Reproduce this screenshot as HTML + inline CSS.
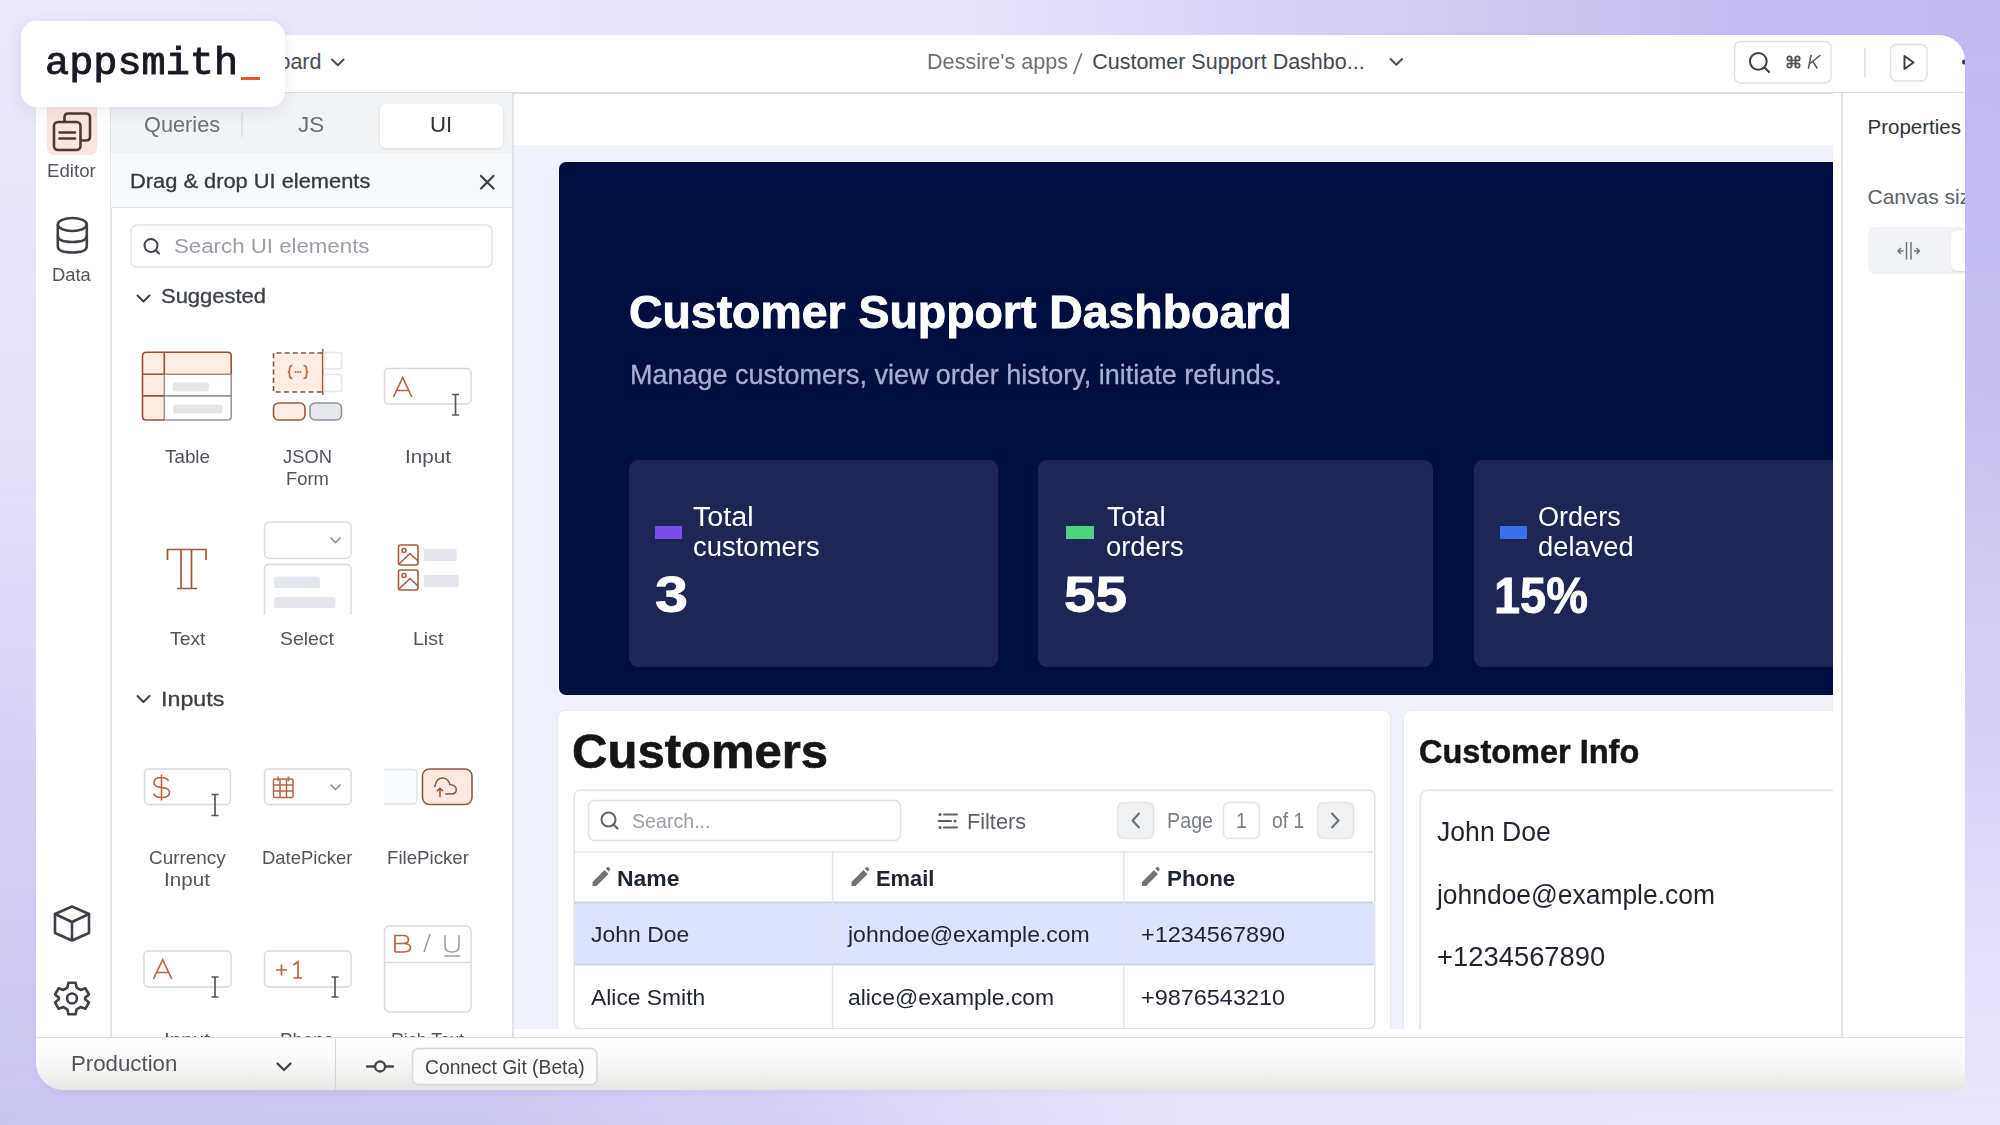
<!DOCTYPE html>
<html><head><meta charset="utf-8">
<style>
*{box-sizing:border-box;margin:0;padding:0}
html,body{width:2000px;height:1125px;overflow:hidden;font-family:"Liberation Sans",sans-serif}
body{position:relative;background:#dcd6f6}
.a{position:absolute}
#bg1{left:0;top:0;width:2000px;height:1125px;background:linear-gradient(to right,#ebe8f9 0%,#e7e3f8 48%,#dcd7f6 60%,#cdc6f2 75%,#c3bbf1 88%,#c1b9f0 100%)}
#bg2{left:0;top:0;width:2000px;height:1125px;background:linear-gradient(to right,#c9c3f1 0%,#cbc5f2 25%,#d3cef4 36%,#dfdbf7 48%,#e7e4f9 60%,#e9e6f9 100%);-webkit-mask-image:linear-gradient(to bottom,transparent 0%,rgba(0,0,0,.12) 35%,rgba(0,0,0,.5) 62%,rgba(0,0,0,.88) 85%,#000 100%)}
#shadow{left:36px;top:35px;width:1929px;height:1055px;border-radius:26px 26px 3px 28px;box-shadow:0 8px 14px -10px rgba(60,40,140,.08)}
#win{left:0;top:0;width:2000px;height:1125px;clip-path:inset(35px 35px 35px 36px round 26px 26px 3px 28px);background:#fff}
.t{position:absolute;white-space:nowrap;line-height:1;z-index:2}
.bl{position:absolute;background:#e4e5e8}
svg{position:absolute;overflow:visible}
</style></head><body>
<div id="bg1" class="a"></div>
<div id="bg2" class="a"></div>
<div id="shadow" class="a"></div>
<div id="win" class="a">
  <!-- ===== header ===== -->
  <div class="bl" style="left:36px;top:92px;width:1929px;height:1.5px;background:#dcdee2"></div>
  <!-- header breadcrumb chevrons -->
  <svg style="left:0;top:0" width="2000" height="100">
    <path d="M332 59.5 L337.8 65.3 L343.6 59.5" fill="none" stroke="#4a4f57" stroke-width="2" stroke-linecap="round" stroke-linejoin="round"/>
    <path d="M1074 73.5 L1081.5 54" stroke="#6e727a" stroke-width="1.7" stroke-linecap="round"/>
    <path d="M1390.5 59 L1396.3 64.8 L1402.1 59" fill="none" stroke="#4a4f57" stroke-width="2" stroke-linecap="round" stroke-linejoin="round"/>
    <!-- search box -->
    <rect x="1734.5" y="41.5" width="96.5" height="41.5" rx="6" fill="#fff" stroke="#dfe1e5" stroke-width="1.5"/>
    <circle cx="1758.3" cy="61.3" r="8.4" fill="none" stroke="#3c4046" stroke-width="2"/>
    <path d="M1764.3 67.3 L1769 72" stroke="#3c4046" stroke-width="2.2" stroke-linecap="round"/>
    <!-- cmd symbol -->
    <g fill="none" stroke="#4f535a" stroke-width="1.7">
      <path d="M1791.5 58.5 V65.5 M1795.5 58.5 V65.5 M1791.5 60.5 H1795.5 M1791.5 63.5 H1795.5"/>
      <circle cx="1789.5" cy="58.5" r="2.2"/><circle cx="1797.5" cy="58.5" r="2.2"/><circle cx="1789.5" cy="65.5" r="2.2"/><circle cx="1797.5" cy="65.5" r="2.2"/>
    </g>
    <path d="M1811 55.5 L1808.5 68 M1820 55.5 L1810.5 63 M1812.8 61.5 L1817 68" fill="none" stroke="#4f535a" stroke-width="1.5" stroke-linecap="round"/>
    <!-- divider -->
    <path d="M1865 48 V77" stroke="#dcdee2" stroke-width="1.5"/>
    <!-- play btn -->
    <rect x="1890.5" y="44.5" width="36.5" height="36.5" rx="6" fill="#fff" stroke="#dfe1e5" stroke-width="1.5"/>
    <path d="M1904.5 56 L1913.5 62.5 L1904.5 69 Z" fill="none" stroke="#3c4048" stroke-width="2" stroke-linejoin="round"/>
    <circle cx="1964.5" cy="62" r="2.5" fill="#3c4048"/>
  </svg>

  <!-- ===== left sidebar ===== -->
  <div class="bl" style="left:110px;top:93px;width:1.5px;height:944px"></div>
  <div class="a" style="left:47px;top:98px;width:50px;height:57px;border-radius:7px;background:#f9e6df"></div>
  <svg style="left:0;top:0" width="120" height="1040">
    <g fill="none" stroke="#4d3a33" stroke-width="2.6" stroke-linejoin="round">
      <path d="M64.5 122 V117.5 Q64.5 113.5 68.5 113.5 H86 Q90 113.5 90 117.5 V136.5 Q90 140.5 86 140.5 H80.5"/>
      <rect x="54" y="122" width="26.5" height="28" rx="4"/>
      <path d="M59.5 132.5 H75 M59.5 138.5 H75" stroke-linecap="round"/>
    </g>
    <g fill="none" stroke="#3c4048" stroke-width="2.6">
      <ellipse cx="72.3" cy="224.5" rx="14.5" ry="6.5"/>
      <path d="M57.8 224.5 V246 Q57.8 252.5 72.3 252.5 Q86.8 252.5 86.8 246 V224.5"/>
      <path d="M57.8 235.5 Q57.8 242 72.3 242 Q86.8 242 86.8 235.5"/>
    </g>
    <g fill="none" stroke="#3c4048" stroke-width="2.6" stroke-linejoin="round">
      <path d="M72 906.5 L89 914 V933 L72 940.5 L55 933 V914 Z"/>
      <path d="M55 914 L72 922 L89 914 M72 922 V940.5"/>
    </g>
    <g transform="translate(72 998.5) scale(0.9)" fill="none" stroke="#3c4048" stroke-width="2.9" stroke-linejoin="round">
      <path d="M-4 -17.5 H4 L5.2 -12 L9.5 -9.5 L14.8 -11.4 L18.8 -4.5 L14.6 -0.8 V0.8 L18.8 4.5 L14.8 11.4 L9.5 9.5 L5.2 12 L4 17.5 H-4 L-5.2 12 L-9.5 9.5 L-14.8 11.4 L-18.8 4.5 L-14.6 0.8 V-0.8 L-18.8 -4.5 L-14.8 -11.4 L-9.5 -9.5 L-5.2 -12 Z"/>
      <circle cx="0" cy="0" r="5.5"/>
    </g>
  </svg>

  <!-- ===== left panel ===== -->
  <div class="a" style="left:111px;top:93px;width:401px;height:60px;background:#f1f3f5"></div>
  <div class="a" style="left:111px;top:153px;width:401px;height:54px;background:#f8f9fa"></div>
  <div class="bl" style="left:111px;top:206.5px;width:401px;height:1.5px;background:#e3e5e8"></div>
  <div class="a" style="left:379.5px;top:104px;width:123px;height:44px;border-radius:6px;background:#fff;box-shadow:0 1px 3px rgba(0,0,0,.10)"></div>
  <div class="bl" style="left:512px;top:93px;width:1.5px;height:944px;background:#e2e4e7"></div>
  <svg style="left:0;top:0" width="520" height="1040">
    <path d="M242 113 V137" stroke="#dadde1" stroke-width="1.5"/>
    <path d="M481 176 L493.5 188.5 M493.5 176 L481 188.5" stroke="#3c4048" stroke-width="2.2" stroke-linecap="round"/>
    <rect x="131" y="225" width="361" height="42" rx="6" fill="#fff" stroke="#dfe2e6" stroke-width="1.5"/>
    <circle cx="151" cy="245.5" r="6.5" fill="none" stroke="#3c4048" stroke-width="2"/>
    <path d="M155.8 250.3 L159 253.5" stroke="#3c4048" stroke-width="2" stroke-linecap="round"/>
    <path d="M137.5 295.5 L143.5 301.5 L149.5 295.5" fill="none" stroke="#3c4048" stroke-width="2" stroke-linecap="round" stroke-linejoin="round"/>
    <path d="M137.5 696 L143.5 702 L149.5 696" fill="none" stroke="#3c4048" stroke-width="2" stroke-linecap="round" stroke-linejoin="round"/>

    <!-- Table icon -->
    <g stroke-width="1.6">
      <path d="M142.5 356 Q142.5 352.3 146.2 352.3 H227.5 Q231.2 352.3 231.2 356 V374.2 H142.5 Z" fill="#fdede3"/>
      <rect x="142.5" y="374.2" width="21.8" height="46" fill="#fdede3"/>
      <path d="M164.3 374.2 V420 H227.5 Q231.2 420 231.2 416.3 V374.2" fill="none" stroke="#94989e"/>
      <path d="M164.3 395.9 H231.2" stroke="#94989e"/>
      <path d="M164.3 374.2 H231.2" stroke="#a98a7e"/>
      <path d="M231.2 374.2 V356 Q231.2 352.3 227.5 352.3 H146.2 Q142.5 352.3 142.5 356 V416.3 Q142.5 420 146.2 420 H164.3 M164.3 374.2 V352.3 M142.5 374.2 H164.3 M142.5 395.9 H164.3" fill="none" stroke="#9c4e32"/>
      <rect x="172.9" y="382.3" width="36" height="9.3" rx="3" fill="#e3e5e9"/>
      <rect x="172.9" y="404.4" width="50" height="9" rx="3" fill="#e3e5e9"/>
    </g>
    <!-- JSON form icon -->
    <g stroke-width="1.6">
      <rect x="273.5" y="353" width="49" height="39" fill="#fdede3"/>
      <path d="M322.5 353 H273.5 V392 H322.5" fill="none" stroke="#7d5647" stroke-dasharray="5 3.2"/>
      <path d="M322.7 349 V395" stroke="#a05739"/>
      <path d="M292.5 365.5 Q289.5 365.5 289.5 368.5 V370 Q289.5 372 287.8 372 Q289.5 372 289.5 374 V375.5 Q289.5 378.5 292.5 378.5 M303.5 365.5 Q306.5 365.5 306.5 368.5 V370 Q306.5 372 308.2 372 Q306.5 372 306.5 374 V375.5 Q306.5 378.5 303.5 378.5" fill="none" stroke="#c26a42" stroke-width="1.7"/>
      <circle cx="295.5" cy="372" r="1.1" fill="#c26a42"/><circle cx="298" cy="372" r="1.1" fill="#c26a42"/><circle cx="300.5" cy="372" r="1.1" fill="#c26a42"/>
      <rect x="324" y="352.5" width="17.5" height="16.5" rx="2.5" fill="#fff" stroke="#e4e6ea"/>
      <rect x="324" y="374.5" width="17.5" height="17" rx="2.5" fill="#fff" stroke="#e4e6ea"/>
      <rect x="273.5" y="403" width="31.5" height="17" rx="5" fill="#fdede3" stroke="#a05739"/>
      <rect x="310" y="403" width="31.5" height="17" rx="5" fill="#e5e7ec" stroke="#8f949b"/>
    </g>
    <!-- Input icon -->
    <rect x="384.5" y="368.5" width="86.5" height="35.5" rx="4" fill="#fff" stroke="#d8dbdf" stroke-width="1.5"/>
    <path d="M393.5 397 L402.7 377.5 L411.8 397 M396.7 390.5 H408.6" fill="none" stroke="#bb6241" stroke-width="1.6"/>
    <path d="M455.5 394.5 V415 M452 394.5 H459 M452 415 H459" fill="none" stroke="#55595f" stroke-width="1.7"/>
    <!-- Text icon -->
    <g fill="none" stroke="#a05739" stroke-width="1.7">
      <path d="M167.5 560 V549.5 H206 V560"/>
      <path d="M181 549.5 V588.5 M191.5 549.5 V588.5 M177 588.5 H197"/>
    </g>
    <!-- Select icon -->
    <rect x="264.5" y="522" width="86.5" height="36.5" rx="5" fill="#fff" stroke="#dadde1" stroke-width="1.5"/>
    <path d="M330.5 537.5 L335.5 542.5 L340.5 537.5" fill="none" stroke="#8d9299" stroke-width="1.6"/>
    <path d="M264.5 615 V569 Q264.5 564.5 269 564.5 H346.5 Q351 564.5 351 569 V615" fill="#fff" stroke="#dadde1" stroke-width="1.5"/>
    <rect x="274" y="576.6" width="46" height="11.5" rx="2.5" fill="#e3e6ec"/>
    <rect x="274" y="597" width="61.5" height="11" rx="2.5" fill="#e3e6ec"/>
    <!-- List icon -->
    <g fill="none" stroke="#a95b3d" stroke-width="1.6">
      <rect x="398.5" y="545" width="19.5" height="20" rx="2"/>
      <rect x="398.5" y="570" width="19.5" height="20" rx="2"/>
      <circle cx="404" cy="550.5" r="2"/><circle cx="404" cy="575.5" r="2"/>
      <path d="M399 564 L410 553.5 L418 561 M399 589 L410 578.5 L418 586"/>
    </g>
    <rect x="424" y="549" width="32.5" height="12" rx="1.5" fill="#e2e5ea"/>
    <rect x="424" y="575" width="34.5" height="12" rx="1.5" fill="#e2e5ea"/>

    <!-- Currency input -->
    <rect x="144.5" y="769" width="86" height="35.5" rx="4" fill="#fff" stroke="#d8dbdf" stroke-width="1.5"/>
    <path d="M168.5 781 Q167 777.5 161.5 777.5 Q154 777.5 154 782.5 Q154 787 161.5 787.5 Q169.5 788 169.5 792.5 Q169.5 797.5 161.5 797.5 Q155 797.5 153.5 793.5 M161.5 774.5 V800.5" fill="none" stroke="#bb6241" stroke-width="1.6"/>
    <path d="M215 794.5 V815.5 M211.5 794.5 H218.5 M211.5 815.5 H218.5" fill="none" stroke="#55595f" stroke-width="1.7"/>
    <!-- DatePicker -->
    <rect x="264.5" y="769" width="86.5" height="35.5" rx="4" fill="#fff" stroke="#d8dbdf" stroke-width="1.5"/>
    <g fill="none" stroke="#bb6241" stroke-width="1.5">
      <rect x="273.5" y="779" width="19.5" height="18.5" rx="1.5"/>
      <path d="M273.5 785 H293 M273.5 791 H293 M280 779 V797.5 M286.5 779 V797.5 M278 776.5 V781 M288.5 776.5 V781"/>
    </g>
    <path d="M330.5 784.5 L335.5 789.5 L340.5 784.5" fill="none" stroke="#8d9299" stroke-width="1.6"/>
    <!-- FilePicker -->
    <path d="M384 769.5 H413 Q417 769.5 417 773.5 V800 Q417 804 413 804 H384" fill="#fafbfc" stroke="#e3e5e8" stroke-width="1.5"/>
    <rect x="422.5" y="769" width="49.5" height="35.5" rx="7" fill="#fde9e1" stroke="#8f5b45" stroke-width="1.6"/>
    <path d="M434.8 786.5 Q436.5 778 442.3 778 Q448 778 450 784.5 Q456.3 785.5 456.3 789.5 Q456.3 794 451 794 H445.8" fill="none" stroke="#8d5642" stroke-width="1.5" stroke-linecap="round"/>
    <path d="M440 796.5 V788.2 M437.4 790.8 L440 788.2 L442.6 790.8" fill="none" stroke="#b0452e" stroke-width="1.5" stroke-linecap="round"/>

    <!-- Input row4 -->
    <rect x="144" y="951" width="87" height="36" rx="4" fill="#fff" stroke="#d8dbdf" stroke-width="1.5"/>
    <path d="M153.5 979 L162.7 959.7 L171.8 979 M156.7 972.5 H168.6" fill="none" stroke="#bb6241" stroke-width="1.6"/>
    <path d="M215 977 V997 M211.5 977 H218.5 M211.5 997 H218.5" fill="none" stroke="#55595f" stroke-width="1.7"/>
    <!-- Phone -->
    <rect x="264.5" y="951" width="86.5" height="36" rx="4" fill="#fff" stroke="#d8dbdf" stroke-width="1.5"/>
    <path d="M276 970 H287 M281.5 964.5 V975.5 M293.5 965 L298 961.7 V978 M293.5 978 H302" fill="none" stroke="#bb6241" stroke-width="1.7"/>
    <path d="M335 977 V997 M331.5 977 H338.5 M331.5 997 H338.5" fill="none" stroke="#55595f" stroke-width="1.7"/>
    <!-- Rich text -->
    <rect x="384.5" y="926" width="86.5" height="86" rx="5" fill="#fff" stroke="#d8dbdf" stroke-width="1.5"/>
    <path d="M384.5 962.6 H471" stroke="#dadde1" stroke-width="1.5"/>
    <path d="M395 952 V935.5 H403 Q408.5 935.5 408.5 939.8 Q408.5 943.5 403 943.5 H395 M403 943.5 Q410.5 943.5 410.5 947.8 Q410.5 952 403 952 H395" fill="none" stroke="#bb6241" stroke-width="1.7"/>
    <path d="M430 934 L424 952" stroke="#9a9ea5" stroke-width="1.5"/>
    <path d="M445 935 V946 Q445 952 452 952 Q459 952 459 946 V935 M444.5 956 H460" fill="none" stroke="#9a9ea5" stroke-width="1.5"/>
  </svg>

  <!-- ===== canvas ===== -->
  <div class="a" style="left:513.5px;top:145px;width:1319.5px;height:892px;background:#eff2fa"></div>
  <div class="a" style="left:559px;top:161.5px;width:1274px;height:533.5px;border-radius:7px 0 0 7px;background:#010f40;overflow:hidden">
    <div class="a" style="left:70px;top:298.5px;width:369px;height:207px;border-radius:9px;background:#1d2655"></div>
    <div class="a" style="left:479px;top:298.5px;width:395px;height:207px;border-radius:9px;background:#1d2655"></div>
    <div class="a" style="left:915px;top:298.5px;width:400px;height:207px;border-radius:9px;background:#1d2655"></div>
    <div class="a" style="left:96px;top:364px;width:27px;height:13px;background:#7b4de8"></div>
    <div class="a" style="left:506.5px;top:364px;width:28.5px;height:13px;background:#4bd37f"></div>
    <div class="a" style="left:941px;top:364px;width:26.5px;height:13.5px;background:#3b6fe8"></div>
  </div>
  <!-- customers card -->
  <div class="a" style="left:557.5px;top:710.5px;width:832.5px;height:340px;border-radius:7px;background:#fff;box-shadow:0 0 0 1px #e6e8ef"></div>
  <div class="a" style="left:574.5px;top:790.5px;width:799px;height:237.5px;border-radius:5px;background:#fff;box-shadow:0 0 0 1.5px #e1e3e8"></div>
  <div class="a" style="left:574.5px;top:902.5px;width:799px;height:62px;background:#dce3fa"></div>
  <svg style="left:0;top:0" width="1850" height="1040">
    <rect x="588.5" y="800.5" width="312" height="40" rx="6" fill="#fff" stroke="#dfe2e6" stroke-width="1.5"/>
    <circle cx="608.5" cy="819.5" r="7" fill="none" stroke="#62676e" stroke-width="2.1"/>
    <path d="M613.5 824.5 L617.5 828.5" stroke="#62676e" stroke-width="2.3" stroke-linecap="round"/>
    <!-- filters icon -->
    <g stroke="#5d626a" stroke-width="2" stroke-linecap="round">
      <path d="M944 814.5 H957 M938.5 821 H951 M944 827.5 H957"/>
    </g>
    <circle cx="940" cy="814.5" r="1.6" fill="#5d626a"/><circle cx="955" cy="821" r="1.6" fill="#5d626a"/><circle cx="940" cy="827.5" r="1.6" fill="#5d626a"/>
    <!-- prev/next -->
    <rect x="1117.5" y="802.5" width="36" height="36" rx="6" fill="#f0f1f3" stroke="#e3e5e8" stroke-width="1.5"/>
    <path d="M1139 813.5 L1132.5 820.5 L1139 827.5" fill="none" stroke="#6a6f77" stroke-width="2" stroke-linecap="round" stroke-linejoin="round"/>
    <rect x="1223.5" y="802.5" width="36" height="36" rx="6" fill="#fff" stroke="#e3e5e8" stroke-width="1.5"/>
    <rect x="1317.5" y="802.5" width="36" height="36" rx="6" fill="#f0f1f3" stroke="#e3e5e8" stroke-width="1.5"/>
    <path d="M1332 813.5 L1338.5 820.5 L1332 827.5" fill="none" stroke="#6a6f77" stroke-width="2" stroke-linecap="round" stroke-linejoin="round"/>
    <!-- table grid -->
    <path d="M574.5 852 H1373 M574.5 902.5 H1373 M574.5 964.5 H1373" stroke="#e1e3e8" stroke-width="1.5"/>
    <path d="M574.5 902.5 H1373 M574.5 964.5 H1373" stroke="#c9cfdc" stroke-width="1.5"/>
    <path d="M832.5 852 V1028 M1123.7 852 V1028" stroke="#e3e5ea" stroke-width="1.5"/>
    <!-- pencils -->
    <g fill="#6f737a">
      <path d="M592.5 882 L604.5 870 L608.5 874 L596.5 886 L592.5 886 Z M605.8 868.7 L607.2 867.3 Q608 866.5 608.8 867.3 L610 868.5 Q610.8 869.3 610 870.1 L608.6 871.5 Z"/>
      <path d="M851.5 882 L863.5 870 L867.5 874 L855.5 886 L851.5 886 Z M864.8 868.7 L866.2 867.3 Q867 866.5 867.8 867.3 L869 868.5 Q869.8 869.3 869 870.1 L867.6 871.5 Z"/>
      <path d="M1142 882 L1154 870 L1158 874 L1146 886 L1142 886 Z M1155.3 868.7 L1156.7 867.3 Q1157.5 866.5 1158.3 867.3 L1159.5 868.5 Q1160.3 869.3 1159.5 870.1 L1158.1 871.5 Z"/>
    </g>
  </svg>
  <!-- customer info card -->
  <div class="a" style="left:1403.5px;top:711px;width:460px;height:340px;border-radius:7px;background:#fff;box-shadow:0 0 0 1px #e6e8ef"></div>
  <div class="a" style="left:1420.5px;top:790.5px;width:440px;height:300px;border-radius:7px;background:#fff;box-shadow:0 0 0 1.5px #e2e4e9"></div>

  <div class="a" style="left:513.5px;top:1028.5px;width:1328px;height:9px;background:#fff"></div>
  <!-- ===== properties ===== -->
  <div class="a" style="left:1833px;top:93px;width:10px;height:944px;background:#fff"></div>
  <div class="a" style="left:1841px;top:93px;width:130px;height:944px;background:#fff"></div>
  <div class="bl" style="left:1841px;top:93px;width:1.5px;height:944px;background:#e2e4e7"></div>
  <div class="a" style="left:1868px;top:227px;width:110px;height:47px;border-radius:7px;background:#f1f3f6"></div>
  <div class="a" style="left:1951px;top:231px;width:40px;height:40px;border-radius:6px;background:#fff;box-shadow:0 1px 2px rgba(0,0,0,.1)"></div>
  <svg style="left:0;top:0" width="2000" height="300">
    <path d="M1906.5 242 V259.5 M1911 242 V259.5" stroke="#6e737b" stroke-width="1.5"/>
    <path d="M1903.5 251 H1898 M1901 248 L1898 251 L1901 254 M1914 251 H1919.5 M1916.5 248 L1919.5 251 L1916.5 254" fill="none" stroke="#6e737b" stroke-width="1.5" stroke-linejoin="round"/>
  </svg>

  <!-- ===== footer ===== -->
  <div class="a" style="left:36px;top:1037px;width:1929px;height:53px;background:linear-gradient(#fff 0%,#fcfcfc 30%,#f2f2f1 68%,#e4e4e2 100%);z-index:3"></div>
  <div class="bl" style="left:36px;top:1036.5px;width:1929px;height:1.5px;background:#dcdee2;z-index:3"></div>
  <div class="bl" style="left:334.5px;top:1037px;width:1.5px;height:53px;background:#d3d5d8;z-index:3"></div>
  <svg style="left:0;top:0;z-index:3" width="700" height="1125">
    <path d="M277.5 1063.5 L284 1070 L290.5 1063.5" fill="none" stroke="#3c4048" stroke-width="2.2" stroke-linecap="round" stroke-linejoin="round"/>
    <path d="M367 1066.5 H374.8 M385.5 1066.5 H393" stroke="#44484f" stroke-width="2.3" stroke-linecap="round"/>
    <circle cx="380.1" cy="1066.5" r="5" fill="none" stroke="#44484f" stroke-width="2.3"/>
    <rect x="412.5" y="1048.5" width="184.5" height="36" rx="6" fill="#fbfbfb" stroke="#d6d8dc" stroke-width="1.5"/>
  </svg>

<div class="t" style="left:216.3px;top:52.00px;font-size:21.5px;font-weight:400;color:#4a4f57;font-family:'Liberation Sans',sans-serif;">Dashboard</div>
<div class="t" style="left:926.9px;top:51.50px;font-size:21.5px;font-weight:400;color:#6b6f76;font-family:'Liberation Sans',sans-serif;transform:scaleX(1.0059);transform-origin:0 0;">Dessire's apps</div>
<div class="t" style="left:1092.2px;top:51.50px;font-size:21.5px;font-weight:400;color:#44484f;font-family:'Liberation Sans',sans-serif;">Customer Support Dashbo...</div>
<div class="t" style="left:143.9px;top:115.00px;font-size:21.5px;font-weight:400;color:#6b7079;font-family:'Liberation Sans',sans-serif;transform:scaleX(1.0113);transform-origin:0 0;">Queries</div>
<div class="t" style="left:297.9px;top:115.00px;font-size:21.5px;font-weight:400;color:#6b7079;font-family:'Liberation Sans',sans-serif;transform:scaleX(1.0421);transform-origin:0 0;">JS</div>
<div class="t" style="left:429.9px;top:115.00px;font-size:21.5px;font-weight:400;color:#2f343b;font-family:'Liberation Sans',sans-serif;transform:scaleX(1.0302);transform-origin:0 0;">UI</div>
<div class="t" style="left:130.0px;top:171.00px;font-size:20.5px;font-weight:400;color:#343a42;font-family:'Liberation Sans',sans-serif;transform:scaleX(1.0653);transform-origin:0 0;-webkit-text-stroke:0.3px #343a42">Drag &amp; drop UI elements</div>
<div class="t" style="left:173.6px;top:236.00px;font-size:20.5px;font-weight:400;color:#9a9fa7;font-family:'Liberation Sans',sans-serif;transform:scaleX(1.0856);transform-origin:0 0;">Search UI elements</div>
<div class="t" style="left:161.0px;top:286.00px;font-size:20px;font-weight:400;color:#3b4048;font-family:'Liberation Sans',sans-serif;transform:scaleX(1.0979);transform-origin:0 0;-webkit-text-stroke:0.3px #3b4048">Suggested</div>
<div class="t" style="left:47.1px;top:163.00px;font-size:17.5px;font-weight:400;color:#505660;font-family:'Liberation Sans',sans-serif;transform:scaleX(1.0663);transform-origin:0 0;">Editor</div>
<div class="t" style="left:52.1px;top:267.00px;font-size:17.5px;font-weight:400;color:#505660;font-family:'Liberation Sans',sans-serif;transform:scaleX(1.0482);transform-origin:0 0;">Data</div>
<div class="t" style="left:164.6px;top:447.00px;font-size:19px;font-weight:400;color:#50555d;font-family:'Liberation Sans',sans-serif;transform:scaleX(0.9907);transform-origin:0 0;">Table</div>
<div class="t" style="left:283.1px;top:447.00px;font-size:19px;font-weight:400;color:#50555d;font-family:'Liberation Sans',sans-serif;transform:scaleX(0.9647);transform-origin:0 0;">JSON</div>
<div class="t" style="left:286.1px;top:469.00px;font-size:19px;font-weight:400;color:#50555d;font-family:'Liberation Sans',sans-serif;transform:scaleX(0.9678);transform-origin:0 0;">Form</div>
<div class="t" style="left:405.1px;top:447.00px;font-size:19px;font-weight:400;color:#50555d;font-family:'Liberation Sans',sans-serif;transform:scaleX(1.0860);transform-origin:0 0;">Input</div>
<div class="t" style="left:169.6px;top:629.00px;font-size:19px;font-weight:400;color:#50555d;font-family:'Liberation Sans',sans-serif;transform:scaleX(1.0155);transform-origin:0 0;">Text</div>
<div class="t" style="left:280.1px;top:629.00px;font-size:19px;font-weight:400;color:#50555d;font-family:'Liberation Sans',sans-serif;transform:scaleX(1.0206);transform-origin:0 0;">Select</div>
<div class="t" style="left:412.6px;top:629.00px;font-size:19px;font-weight:400;color:#50555d;font-family:'Liberation Sans',sans-serif;transform:scaleX(1.0278);transform-origin:0 0;">List</div>
<div class="t" style="left:161.0px;top:688.50px;font-size:20px;font-weight:400;color:#3b4048;font-family:'Liberation Sans',sans-serif;transform:scaleX(1.1618);transform-origin:0 0;-webkit-text-stroke:0.3px #3b4048">Inputs</div>
<div class="t" style="left:148.9px;top:848.00px;font-size:19px;font-weight:400;color:#50555d;font-family:'Liberation Sans',sans-serif;transform:scaleX(0.9938);transform-origin:0 0;">Currency</div>
<div class="t" style="left:164.1px;top:870.00px;font-size:19px;font-weight:400;color:#50555d;font-family:'Liberation Sans',sans-serif;transform:scaleX(1.0860);transform-origin:0 0;">Input</div>
<div class="t" style="left:262.1px;top:848.00px;font-size:19px;font-weight:400;color:#50555d;font-family:'Liberation Sans',sans-serif;transform:scaleX(0.9718);transform-origin:0 0;">DatePicker</div>
<div class="t" style="left:387.1px;top:848.00px;font-size:19px;font-weight:400;color:#50555d;font-family:'Liberation Sans',sans-serif;transform:scaleX(0.9819);transform-origin:0 0;">FilePicker</div>
<div class="t" style="left:164.1px;top:1030.00px;font-size:19px;font-weight:400;color:#50555d;font-family:'Liberation Sans',sans-serif;transform:scaleX(1.0860);transform-origin:0 0;">Input</div>
<div class="t" style="left:280.1px;top:1030.00px;font-size:19px;font-weight:400;color:#50555d;font-family:'Liberation Sans',sans-serif;transform:scaleX(0.9808);transform-origin:0 0;">Phone</div>
<div class="t" style="left:391.1px;top:1030.00px;font-size:19px;font-weight:400;color:#50555d;font-family:'Liberation Sans',sans-serif;transform:scaleX(0.9371);transform-origin:0 0;">Rich Text</div>
<div class="t" style="left:70.5px;top:1052.80px;font-size:21.8px;font-weight:400;color:#50555d;font-family:'Liberation Sans',sans-serif;transform:scaleX(1.0207);transform-origin:0 0;z-index:4">Production</div>
<div class="t" style="left:424.9px;top:1056.00px;font-size:21px;font-weight:400;color:#3f444b;font-family:'Liberation Sans',sans-serif;transform:scaleX(0.9177);transform-origin:0 0;z-index:4">Connect Git (Beta)</div>
<div class="t" style="left:1867.5px;top:117.00px;font-size:20.5px;font-weight:400;color:#30353c;font-family:'Liberation Sans',sans-serif;">Properties</div>
<div class="t" style="left:1867.5px;top:186.30px;font-size:21px;font-weight:400;color:#5d626a;font-family:'Liberation Sans',sans-serif;">Canvas size</div>
<div class="t" style="left:628.7px;top:288.80px;font-size:46px;font-weight:700;color:#fff;font-family:'Liberation Sans',sans-serif;transform:scaleX(1.0088);transform-origin:0 0;-webkit-text-stroke:0.9px #fff">Customer Support Dashboard</div>
<div class="t" style="left:629.6px;top:360.70px;font-size:27.5px;font-weight:400;color:#a6aed3;font-family:'Liberation Sans',sans-serif;transform:scaleX(0.9810);transform-origin:0 0;-webkit-text-stroke:0.3px #a6aed3">Manage customers, view order history, initiate refunds.</div>
<div class="t" style="left:692.6px;top:504.00px;font-size:27px;font-weight:400;color:#fff;font-family:'Liberation Sans',sans-serif;transform:scaleX(1.0640);transform-origin:0 0;">Total</div>
<div class="t" style="left:692.6px;top:534.00px;font-size:27px;font-weight:400;color:#fff;font-family:'Liberation Sans',sans-serif;transform:scaleX(1.0173);transform-origin:0 0;">customers</div>
<div class="t" style="left:654.5px;top:570.00px;font-size:50px;font-weight:700;color:#fff;font-family:'Liberation Sans',sans-serif;transform:scaleX(1.1865);transform-origin:0 0;-webkit-text-stroke:0.8px #fff">3</div>
<div class="t" style="left:1106.7px;top:504.00px;font-size:27px;font-weight:400;color:#fff;font-family:'Liberation Sans',sans-serif;transform:scaleX(1.0290);transform-origin:0 0;">Total</div>
<div class="t" style="left:1105.7px;top:534.00px;font-size:27px;font-weight:400;color:#fff;font-family:'Liberation Sans',sans-serif;transform:scaleX(1.0153);transform-origin:0 0;">orders</div>
<div class="t" style="left:1063.5px;top:570.00px;font-size:50px;font-weight:700;color:#fff;font-family:'Liberation Sans',sans-serif;transform:scaleX(1.1326);transform-origin:0 0;-webkit-text-stroke:0.8px #fff">55</div>
<div class="t" style="left:1537.7px;top:503.70px;font-size:27px;font-weight:400;color:#fff;font-family:'Liberation Sans',sans-serif;transform:scaleX(1.0020);transform-origin:0 0;">Orders</div>
<div class="t" style="left:1537.7px;top:533.50px;font-size:27px;font-weight:400;color:#fff;font-family:'Liberation Sans',sans-serif;transform:scaleX(1.0117);transform-origin:0 0;height:23.5px;overflow:hidden">delayed</div>
<div class="t" style="left:1493.5px;top:570.50px;font-size:50px;font-weight:700;color:#fff;font-family:'Liberation Sans',sans-serif;transform:scaleX(0.9393);transform-origin:0 0;-webkit-text-stroke:0.8px #fff">15%</div>
<div class="t" style="left:572.1px;top:727.00px;font-size:49px;font-weight:700;color:#151515;font-family:'Liberation Sans',sans-serif;-webkit-text-stroke:0.7px #151515">Customers</div>
<div class="t" style="left:632.0px;top:809.50px;font-size:21px;font-weight:400;color:#9a9fa7;font-family:'Liberation Sans',sans-serif;transform:scaleX(0.9340);transform-origin:0 0;">Search...</div>
<div class="t" style="left:966.9px;top:810.90px;font-size:22px;font-weight:400;color:#5d626a;font-family:'Liberation Sans',sans-serif;transform:scaleX(0.9851);transform-origin:0 0;">Filters</div>
<div class="t" style="left:1166.5px;top:809.50px;font-size:22px;font-weight:400;color:#7a7f87;font-family:'Liberation Sans',sans-serif;transform:scaleX(0.8971);transform-origin:0 0;">Page</div>
<div class="t" style="left:1235.9px;top:809.50px;font-size:22px;font-weight:400;color:#7a7f87;font-family:'Liberation Sans',sans-serif;transform:scaleX(0.8816);transform-origin:0 0;">1</div>
<div class="t" style="left:1271.9px;top:809.50px;font-size:22px;font-weight:400;color:#7a7f87;font-family:'Liberation Sans',sans-serif;transform:scaleX(0.8773);transform-origin:0 0;">of 1</div>
<div class="t" style="left:616.6px;top:867.50px;font-size:22px;font-weight:700;color:#1d2630;font-family:'Liberation Sans',sans-serif;transform:scaleX(1.0430);transform-origin:0 0;">Name</div>
<div class="t" style="left:875.7px;top:867.50px;font-size:22px;font-weight:700;color:#1d2630;font-family:'Liberation Sans',sans-serif;transform:scaleX(0.9948);transform-origin:0 0;">Email</div>
<div class="t" style="left:1166.6px;top:867.50px;font-size:22px;font-weight:700;color:#1d2630;font-family:'Liberation Sans',sans-serif;transform:scaleX(1.0144);transform-origin:0 0;">Phone</div>
<div class="t" style="left:590.5px;top:924.00px;font-size:22.5px;font-weight:400;color:#1f2430;font-family:'Liberation Sans',sans-serif;transform:scaleX(1.0200);transform-origin:0 0;">John Doe</div>
<div class="t" style="left:847.9px;top:924.00px;font-size:22.5px;font-weight:400;color:#1f2430;font-family:'Liberation Sans',sans-serif;transform:scaleX(1.0212);transform-origin:0 0;">johndoe@example.com</div>
<div class="t" style="left:1140.9px;top:924.00px;font-size:22.5px;font-weight:400;color:#1f2430;font-family:'Liberation Sans',sans-serif;transform:scaleX(1.0417);transform-origin:0 0;">+1234567890</div>
<div class="t" style="left:590.5px;top:987.00px;font-size:22.5px;font-weight:400;color:#1f2430;font-family:'Liberation Sans',sans-serif;transform:scaleX(1.0151);transform-origin:0 0;">Alice Smith</div>
<div class="t" style="left:847.9px;top:987.00px;font-size:22.5px;font-weight:400;color:#1f2430;font-family:'Liberation Sans',sans-serif;transform:scaleX(1.0154);transform-origin:0 0;">alice@example.com</div>
<div class="t" style="left:1140.9px;top:987.00px;font-size:22.5px;font-weight:400;color:#1f2430;font-family:'Liberation Sans',sans-serif;transform:scaleX(1.0417);transform-origin:0 0;">+9876543210</div>
<div class="t" style="left:1419.3px;top:734.50px;font-size:33px;font-weight:700;color:#151515;font-family:'Liberation Sans',sans-serif;transform:scaleX(0.9849);transform-origin:0 0;-webkit-text-stroke:0.5px #151515">Customer Info</div>
<div class="t" style="left:1436.5px;top:819.00px;font-size:27px;font-weight:400;color:#1f2430;font-family:'Liberation Sans',sans-serif;transform:scaleX(0.9853);transform-origin:0 0;">John Doe</div>
<div class="t" style="left:1436.5px;top:882.00px;font-size:27px;font-weight:400;color:#1f2430;font-family:'Liberation Sans',sans-serif;transform:scaleX(0.9783);transform-origin:0 0;">johndoe@example.com</div>
<div class="t" style="left:1436.7px;top:944.00px;font-size:27px;font-weight:400;color:#1f2430;font-family:'Liberation Sans',sans-serif;transform:scaleX(1.0142);transform-origin:0 0;">+1234567890</div>
</div>
  <!-- ===== logo card ===== -->
  <div class="a" style="left:21px;top:21px;width:264px;height:86px;border-radius:15px;background:#fff;box-shadow:0 4px 16px rgba(70,60,140,.10);z-index:5"></div>
  <div class="a" style="left:240.5px;top:77px;width:19.5px;height:3px;background:#e6582a;z-index:6"></div>
<div class="t" style="left:45.0px;top:43.75px;font-size:39.7px;font-weight:400;color:#181a24;font-family:'Liberation Mono',monospace;transform:scaleX(1.0130);transform-origin:0 0;-webkit-text-stroke:0.9px #181a24;z-index:6">appsmith</div>
</body></html>
